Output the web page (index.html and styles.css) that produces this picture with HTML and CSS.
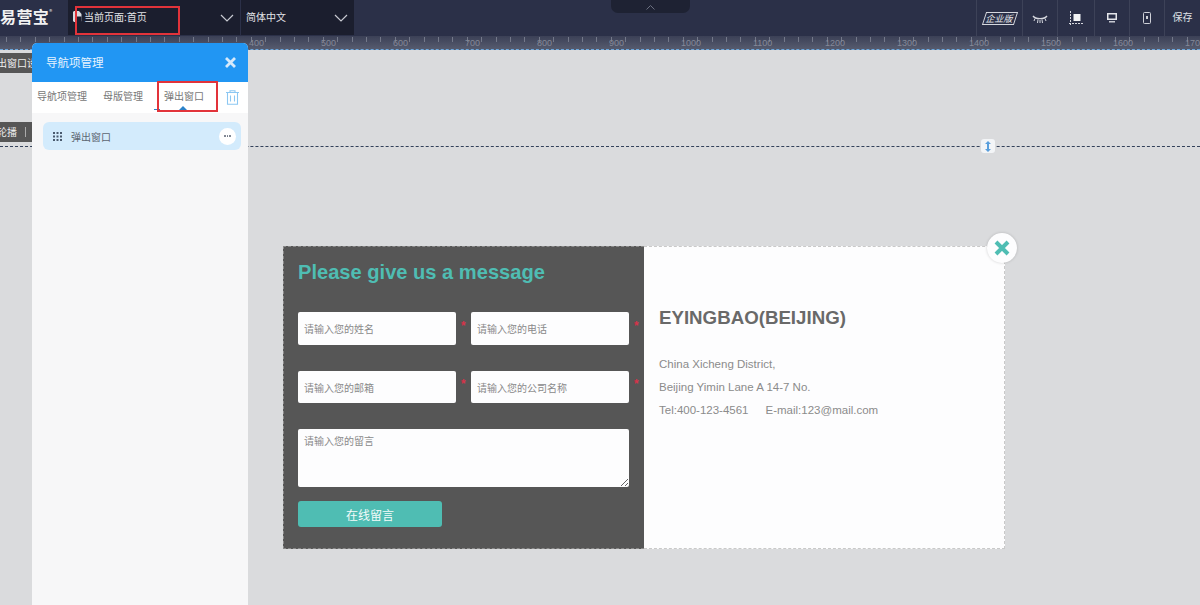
FILE: index.html
```html
<!DOCTYPE html>
<html lang="zh-CN">
<head>
<meta charset="utf-8">
<title>导航项管理</title>
<link rel="stylesheet" href="styles.css">
</head>
<body>
<div class="app">
  <header class="topbar">
    <div class="logo">易营宝<sup>®</sup></div>
    <div class="select select-page">
      <svg class="file-icon" width="9" height="11" viewBox="0 0 9 11"><path d="M1 0h5l2.500 3v7l-1 1H1L0 10V1z" fill="#d8dae0"/><path d="M4 5.500h4.500V11H4z" fill="#1b1e2e"/></svg>
      <span>当前页面:首页</span>
      <svg class="chev" width="14" height="8" viewBox="0 0 14 8"><path d="M1 1l6 6 6-6" fill="none" stroke="#c8cad2" stroke-width="1.200"/></svg>
    </div>
    <div class="select select-lang">
      <span>简体中文</span>
      <svg class="chev" width="14" height="8" viewBox="0 0 14 8"><path d="M1 1l6 6 6-6" fill="none" stroke="#c8cad2" stroke-width="1.200"/></svg>
    </div>
    <div class="spacer">
      <div class="collapse">
        <svg width="9" height="5" viewBox="0 0 9 5"><path d="M.5 4.500l4-4 4 4" fill="none" stroke="#6b7080"/></svg>
      </div>
    </div>
    <div class="tools">
      <div class="tool tool-badge"><span class="badge"><i>企业版</i></span></div>
      <div class="tool tool-eye">
        <svg width="16" height="9" viewBox="0 0 16 9"><path d="M1 1c2.500 3.500 11.500 3.500 14 0" fill="none" stroke="#d5d7de" stroke-width="1.300"/><path d="M3 3.500L2 6M6 4.500L5.500 8M10 4.500l.5 3.500M13 3.500l1 2.500M8 5v3" stroke="#d5d7de" stroke-width="1"/></svg>
      </div>
      <div class="tool tool-crop">
        <svg width="15" height="15" viewBox="0 0 15 15"><path d="M1.500 0v15" stroke="#d5d7de" stroke-dasharray="2 1"/><path d="M0 12.500h15" stroke="#d5d7de" stroke-dasharray="2 1"/><rect x="4.500" y="3" width="7" height="7" fill="#f2f3f5"/></svg>
      </div>
      <div class="tool tool-mon">
        <svg width="10" height="10" viewBox="0 0 10 10"><path d="M0 0h10v7H0z" fill="#e4e5ea"/><path d="M1.500 1.500h7v4h-7z" fill="#2b3048"/><path d="M2 8.800h6" stroke="#e4e5ea" stroke-width="1.300"/></svg>
      </div>
      <div class="tool tool-phone">
        <svg width="8" height="12" viewBox="0 0 8 12"><rect x=".5" y=".5" width="7" height="11" rx="1" fill="none" stroke="#cfd1d8"/><path d="M3 4h2v3H3z" fill="#cfd1d8"/></svg>
      </div>
      <div class="tool tool-save">保存</div>
    </div>
  </header>

  <div class="ruler">
    <span>400</span><span>500</span><span>600</span><span>700</span><span>800</span><span>900</span><span>1000</span><span>1100</span><span>1200</span><span>1300</span><span>1400</span><span>1500</span><span>1600</span><span>1700</span>
  </div>

  <main class="canvas">
    <div class="tag tag-top">出窗口设</div>
    <div class="tag tag-mid">轮播<b></b></div>
    <div class="guide"></div>
    <div class="handle">
      <svg width="8" height="11" viewBox="0 0 8 11"><path d="M4 0l3 3H5v5h2l-3 3-3-3h2V3H1z" fill="#5a9fdc"/></svg>
    </div>

    <section class="popup">
      <div class="form-side">
        <h2 class="form-title">Please give us a message</h2>
        <div class="fields">
          <div class="field"><input placeholder="请输入您的姓名"><em>*</em></div>
          <div class="field"><input placeholder="请输入您的电话"><em>*</em></div>
          <div class="field"><input placeholder="请输入您的邮箱"><em>*</em></div>
          <div class="field"><input placeholder="请输入您的公司名称"><em>*</em></div>
        </div>
        <textarea class="message" placeholder="请输入您的留言"></textarea>
        <button class="submit" type="button">在线留言</button>
      </div>
      <div class="info-side">
        <h3 class="info-title">EYINGBAO(BEIJING)</h3>
        <p>China Xicheng District,</p>
        <p>Beijing Yimin Lane A 14-7 No.</p>
        <p>Tel:400-123-4561<span class="gap"></span>E-mail:123@mail.com</p>
      </div>
      <div class="popup-close">
        <svg width="16" height="16" viewBox="0 0 16 16"><path d="M2 2l12 12M14 2L2 14" stroke="#4fbdb3" stroke-width="4"/></svg>
      </div>
    </section>

    <aside class="panel">
      <div class="panel-head">
        <span>导航项管理</span>
        <svg width="11" height="11" viewBox="0 0 11 11"><path d="M1 1l9 9M10 1l-9 9" stroke="#d5e9fb" stroke-width="2.800"/></svg>
      </div>
      <div class="panel-tabs">
        <span class="tab tab-1">导航项管理</span>
        <span class="tab tab-2">母版管理</span>
        <span class="tab tab-3">弹出窗口</span>
        <svg class="trash" width="13" height="15" viewBox="0 0 13 15"><path d="M0 2.500h13M4 2.500V.7h5v1.800M1.500 2.500v11.800h10V2.500M4.500 5.500v6M8.500 5.500v6" fill="none" stroke="#8cc7f2" stroke-width="1.100"/></svg>
        <i class="tab-mark"></i>
        <i class="tab-arrow"></i>
      </div>
      <div class="panel-body">
        <div class="item">
          <svg width="9" height="9" viewBox="0 0 9 9" fill="#4a5a6e"><path d="M0 0h2v2H0zM3.500 0h2v2h-2zM7 0h2v2H7zM0 3.500h2v2H0zM3.500 3.500h2v2h-2zM7 3.500h2v2H7zM0 7h2v2H0zM3.500 7h2v2h-2zM7 7h2v2H7z"/></svg>
          <span>弹出窗口</span>
          <div class="more"><i></i><i></i><i></i></div>
        </div>
      </div>
    </aside>
  </main>

  <div class="mark mark-page"></div>
  <div class="mark mark-tab"></div>
</div>
</body>
</html>
```
FILE: styles.css
```css
* { box-sizing: border-box; }
html, body { margin: 0; height: 100%; overflow: hidden; }
body {
  font-family: "Liberation Sans", "Noto Sans CJK SC", sans-serif;
  background: #dadbdd;
}
.app { position: relative; width: 1200px; height: 605px; display: flex; flex-direction: column; overflow: hidden; }

/* top bar */
.topbar { height: 36px; flex: none; display: flex; background: #2b3048; color: #e2e3e8; font-size: 10px; }
.logo { width: 68px; padding: 6px 0 0 0; font: 700 16px/20px "Noto Sans CJK SC", sans-serif; color: #f2f2f2; white-space: nowrap; overflow: hidden; letter-spacing: .4px; }
.logo sup { font-size: 6px; line-height: 0; font-weight: 400; vertical-align: 9px; }
.select { height: 35px; display: flex; align-items: center; background: #1b1e2e; border-right: 1px solid #2b3048; font-family: "Noto Sans CJK SC", sans-serif; }
.select-page { width: 173px; padding: 0 0 2px 5px; gap: 2px; }
.select-lang { width: 113px; padding: 0 0 2px 5px; border-right: 0; }
.chev { margin-left: auto; margin-right: 6px; margin-top: 3px; }
.spacer { flex: 1; display: flex; justify-content: center; padding-right: 30px; }
.collapse { width: 79px; height: 13px; margin-left: 1px; background: #1e2233; border-radius: 0 0 7px 7px; display: flex; justify-content: center; align-items: center; padding-top: 1px; }
.tools { display: flex; height: 36px; }
.tool { display: flex; align-items: center; justify-content: center; border-left: 1px solid #3d4258; height: 36px; }
.tool-badge { width: 46px; }
.tool-eye { width: 35px; padding-top: 3px; }
.tool-crop { width: 37px; }
.tool-mon { width: 35px; }
.tool-phone { width: 35px; }
.tool-save { width: 36px; padding-bottom: 3px; font: 10px "Noto Sans CJK SC", sans-serif; color: #dfe0e5; }
.badge { display: block; width: 32px; height: 13px; border: 1px solid #d5d7de; transform: skewX(-18deg); text-align: center; font: 9px/11px "Noto Sans CJK SC", sans-serif; color: #e6e7ec; white-space: nowrap; }
.badge i { display: block; font-style: normal; }

/* ruler */
.ruler {
  height: 14px; flex: none; display: flex; padding-left: 246px; overflow: hidden;
  background-color: #50566a;
  background-image:
    repeating-linear-gradient(90deg, #74798a 0, #74798a 1px, transparent 1px, transparent 14.400px),
    linear-gradient(#3b4056, #565b6e);
  background-size: 100% 5px, 100% 100%; background-repeat: no-repeat; background-position: 6px 1px, 0 0;
  border-bottom: 1px dashed #6ba7dc;
  color: #858998; font-size: 9px; line-height: 15px;
}
.ruler span { flex: 0 0 72px; padding-left: 3px; }

/* canvas */
.canvas { position: relative; flex: 1; background: #dadbdd; }
.tag { position: absolute; left: 0; height: 20px; background: #565656; color: #eee; font: 10px/20px "Noto Sans CJK SC", sans-serif; overflow: hidden; white-space: nowrap; }
.tag-top { top: 3px; width: 33px; text-indent: -3px; }
.tag-mid { top: 72px; width: 33px; text-indent: -3px; }
.tag-mid b { display: inline-block; width: 1px; height: 10px; background: #aaa; margin-left: 8px; vertical-align: -1px; }
.guide { position: absolute; left: 0; right: 0; top: 96px; border-top: 1px dashed #33415a; }
.handle { position: absolute; left: 981px; top: 89px; width: 14px; height: 14px; border-radius: 3px; background: #f3f5f7; display: flex; align-items: center; justify-content: center; }

/* popup */
.popup { position: absolute; left: 283px; top: 196px; width: 722px; height: 303px; display: flex; }
.form-side { width: 361px; padding: 11px 0 0 14px; background: #565656; border: 1px dashed #8a8a8a; border-width: 1px 0 1px 1px; }
.form-title { margin: 0 0 26px; font-size: 20.100px; line-height: 28px; font-weight: 700; color: #4fbdb3; }
.fields { display: grid; grid-template-columns: 158px 158px; column-gap: 15px; row-gap: 26px; }
.field { position: relative; height: 33px; }
.field:nth-child(n+3) { height: 32px; }
.field input { width: 100%; height: 100%; padding: 0 6px; border: 0; border-radius: 2px; background: #fdfdfe; font: 10px "Noto Sans CJK SC", sans-serif; outline: none; }
.field em { position: absolute; left: 163px; top: 4px; color: #d8334a; font: 700 12px/20px "Liberation Sans", sans-serif; }
.field:nth-child(n+3) em { top: 3px; }
.field input::placeholder, .message::placeholder { color: #8a8a8a; opacity: 1; }
.message { display: block; width: 331px; height: 58px; margin-top: 26px; padding: 5px 6px; border: 0; border-radius: 2px; background: #fdfdfe; font: 10px/14px "Noto Sans CJK SC", sans-serif; outline: none; }
.submit { display: block; width: 144px; height: 26px; margin-top: 14px; padding: 0; border: 0; border-radius: 3px; background: #4fbdb3; color: #f4fbfa; font: 12px "Noto Sans CJK SC", sans-serif; }
.info-side { flex: 1; padding: 59px 0 0 15px; background: #fdfdfe; border: 1px dashed #c9c9c9; border-width: 1px 1px 1px 0; color: #8b8b8b; font-size: 11.500px; }
.info-title { margin: 0 0 27px; font-size: 18.700px; line-height: 24px; font-weight: 700; color: #696969; }
.info-side p { margin: 0 0 9px; line-height: 14px; white-space: nowrap; }
.gap { display: inline-block; width: 17px; }
.popup-close { position: absolute; left: 704px; top: -13px; width: 30px; height: 30px; border-radius: 50%; background: #fdfdfe; box-shadow: 0 0 3px rgba(0,0,0,.18); display: flex; align-items: center; justify-content: center; }

/* side panel */
.panel { position: absolute; left: 32px; top: -7px; width: 216px; height: 600px; display: flex; flex-direction: column; background: #f7f7f8; border-radius: 5px 5px 0 0; overflow: hidden; font-family: "Noto Sans CJK SC", sans-serif; }
.panel-head { height: 39px; flex: none; padding: 0 12px 1px 14px; display: flex; align-items: center; justify-content: space-between; background: #2196f3; color: #e6f3fe; font-size: 11.500px; }
.panel-tabs { position: relative; height: 31px; flex: none; display: flex; align-items: center; background: #fff; font-size: 10px; color: #777; padding: 0 0 5px 5px; }
.tab-1 { width: 66px; }
.tab-2 { width: 61px; }
.tab-3 { width: 62px; }
.trash { margin-top: 5px; }
.tab-mark { position: absolute; left: 122px; top: 27px; width: 6px; height: 1px; background: #2b82c9; }
.tab-arrow { position: absolute; left: 147px; top: 24px; width: 0; height: 0; border: 4px solid transparent; border-top: 0; border-bottom: 4px solid #2b82c9; }
.panel-body { flex: 1; padding: 9px 7px 0 11px; }
.item { height: 28px; padding: 0 5px 0 10px; display: flex; align-items: center; gap: 9px; background: #d3ebfc; border-radius: 6px; color: #5c6672; font-size: 10px; }
.more { margin-left: auto; width: 17px; height: 17px; border-radius: 50%; background: #fff; display: flex; align-items: center; justify-content: center; gap: 1px; }
.more i { width: 1.500px; height: 1.500px; background: #6a7280; border-radius: 50%; }

/* red annotation boxes */
.mark { position: absolute; border: 2px solid #e2333a; }
.mark-page { left: 75px; top: 6px; width: 105px; height: 29px; }
.mark-tab { left: 157px; top: 81px; width: 61px; height: 31px; }
```
